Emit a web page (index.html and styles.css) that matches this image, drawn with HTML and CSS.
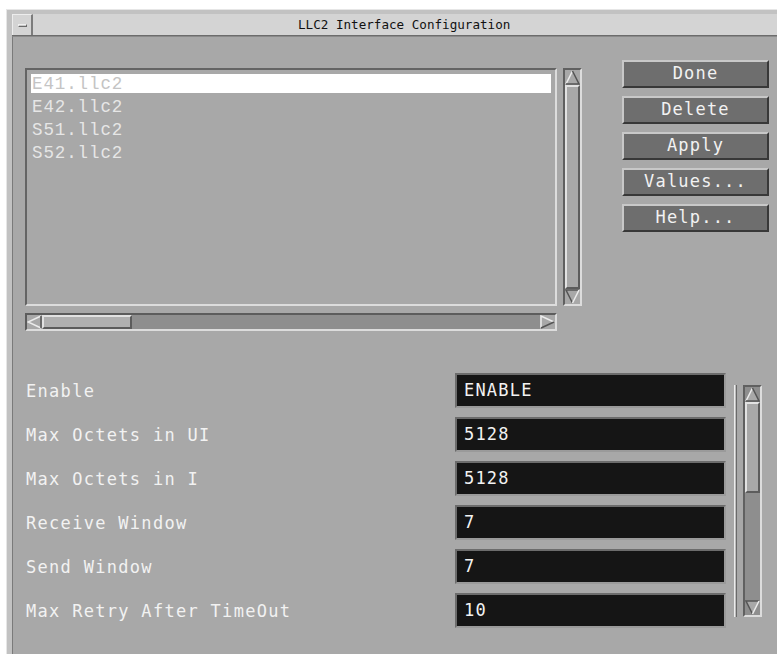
FILE: index.html
```html
<!DOCTYPE html>
<html>
<head>
<meta charset="utf-8">
<title>LLC2 Interface Configuration</title>
<link rel="stylesheet" href="styles.css">
</head>
<body>
<div class="window">
  <div class="titlebar">
    <div class="menu-btn"><span class="menu-bar"></span></div>
    <div class="title">LLC2 Interface Configuration</div>
  </div>
  <div class="client">
    <div class="top">
      <div class="list-col">
        <div class="list-row">
          <div class="listbox">
            <div class="item selected">E41.llc2</div>
            <div class="item">E42.llc2</div>
            <div class="item">S51.llc2</div>
            <div class="item">S52.llc2</div>
          </div>
          <div class="vscroll">
            <div class="arrow">
              <svg width="15" height="15" viewBox="0 0 15 15"><polygon points="7.5,1 1,14 14,14" fill="#a8a8a8"/><polyline points="1,14 7.5,1" stroke="#ececec" stroke-width="1.5" fill="none"/><polyline points="7.5,1 14,14 1,14" stroke="#555" stroke-width="1.5" fill="none"/></svg>
            </div>
            <div class="thumb v-fill"></div>
            <div class="arrow">
              <svg width="15" height="15" viewBox="0 0 15 15"><polygon points="1,1 14,1 7.5,14" fill="#a8a8a8"/><polyline points="14,1 1,1 7.5,14" stroke="#555" stroke-width="1.5" fill="none"/><polyline points="7.5,14 14,1" stroke="#ececec" stroke-width="1.5" fill="none"/></svg>
            </div>
          </div>
        </div>
        <div class="hscroll">
          <div class="harrow">
            <svg width="15" height="14" viewBox="0 0 15 14"><polygon points="1,7 14,1 14,13" fill="#a8a8a8"/><polyline points="14,1 1,7 14,13" stroke="#ececec" stroke-width="1.5" fill="none"/><polyline points="14,1 14,13" stroke="#555" stroke-width="1.5" fill="none"/></svg>
          </div>
          <div class="hthumb"></div>
          <div class="htrough"></div>
          <div class="harrow">
            <svg width="15" height="14" viewBox="0 0 15 14"><polygon points="1,1 14,7 1,13" fill="#a8a8a8"/><polyline points="1,13 1,1 14,7" stroke="#ececec" stroke-width="1.5" fill="none"/><polyline points="14,7 1,13" stroke="#555" stroke-width="1.5" fill="none"/></svg>
          </div>
        </div>
      </div>
      <div class="buttons">
        <div class="btn">Done</div>
        <div class="btn">Delete</div>
        <div class="btn">Apply</div>
        <div class="btn">Values...</div>
        <div class="btn">Help...</div>
      </div>
    </div>
    <div class="form">
      <div class="fields">
        <div class="row"><span class="label">Enable</span><div class="field">ENABLE</div></div>
        <div class="row"><span class="label">Max Octets in UI</span><div class="field">5128</div></div>
        <div class="row"><span class="label">Max Octets in I</span><div class="field">5128</div></div>
        <div class="row"><span class="label">Receive Window</span><div class="field">7</div></div>
        <div class="row"><span class="label">Send Window</span><div class="field">7</div></div>
        <div class="row"><span class="label">Max Retry After TimeOut</span><div class="field">10</div></div>
      </div>
      <div class="form-side">
        <div class="rule"></div>
        <div class="fscroll">
          <div class="arrow">
            <svg width="15" height="15" viewBox="0 0 15 15"><polygon points="7.5,1 1,14 14,14" fill="#a8a8a8"/><polyline points="1,14 7.5,1" stroke="#ececec" stroke-width="1.5" fill="none"/><polyline points="7.5,1 14,14 1,14" stroke="#555" stroke-width="1.5" fill="none"/></svg>
          </div>
          <div class="thumb f-thumb"></div>
          <div class="ftrough"></div>
          <div class="arrow">
            <svg width="15" height="15" viewBox="0 0 15 15"><polygon points="1,1 14,1 7.5,14" fill="#a8a8a8"/><polyline points="14,1 1,1 7.5,14" stroke="#555" stroke-width="1.5" fill="none"/><polyline points="7.5,14 14,1" stroke="#ececec" stroke-width="1.5" fill="none"/></svg>
          </div>
        </div>
      </div>
    </div>
  </div>
</div>
</body>
</html>
```

FILE: styles.css
```css
html, body {
  margin: 0;
  padding: 0;
  background: #ffffff;
  overflow: hidden;
  width: 777px;
  height: 654px;
}

.window {
  margin: 9px 0 0 6px;
  width: 771px;
  height: 645px;
  padding: 4px 0 0 5px;
  background: #c2c2c2;
  border-top: 1px solid #e6e6e6;
  border-left: 1px solid #e6e6e6;
  box-sizing: border-box;
  display: flex;
  flex-direction: column;
}

/* title bar */
.titlebar {
  display: flex;
  height: 22px;
  flex: none;
  background: #d4d4d4;
  border-bottom: 1px solid #6c6c6c;
  box-sizing: border-box;
}

.menu-btn {
  width: 21px;
  height: 21px;
  box-sizing: border-box;
  border-top: 1px solid #ededed;
  border-left: 1px solid #ededed;
  border-right: 2px solid #7c7c7c;
  display: flex;
  align-items: center;
  justify-content: center;
}

.menu-bar {
  width: 9px;
  height: 3px;
  box-sizing: border-box;
  border: 1px solid #6a6a6a;
  border-top-color: #f0f0f0;
  border-left-color: #f0f0f0;
  background: #c8c8c8;
}

.title {
  padding-left: 265px;
  font-family: "DejaVu Sans Mono", monospace;
  font-size: 12.6px;
  line-height: 21px;
  color: #111;
}

/* client area */
.client {
  flex: 1;
  background: #a8a8a8;
  border-left: 1px solid #7a7a7a;
  border-top: 1px solid #8a8a8a;
  overflow: hidden;
}

.top {
  display: flex;
  padding: 23px 0 0 12px;
}

.list-col {
  margin-top: 8px;
}

.list-row {
  display: flex;
  gap: 6px;
}

.listbox {
  width: 532px;
  height: 238px;
  box-sizing: border-box;
  border: 2px solid;
  border-color: #646464 #dcdcdc #dcdcdc #646464;
  padding: 4px;
}

.item {
  height: 19px;
  margin-bottom: 4px;
  padding-left: 1px;
  font-family: "Liberation Mono", "Courier New", monospace;
  font-size: 17.5px;
  letter-spacing: 0.9px;
  line-height: 20px;
  color: #e6e6e6;
}

.item.selected {
  background: #ffffff;
  color: #c4c4c4;
}

/* vertical scrollbars */
.vscroll, .fscroll {
  width: 19px;
  box-sizing: border-box;
  border: 2px solid;
  border-color: #606060 #dcdcdc #dcdcdc #606060;
  display: flex;
  flex-direction: column;
}

.vscroll {
  height: 238px;
}

.arrow {
  height: 15px;
  flex: none;
  display: flex;
}

.thumb {
  box-sizing: border-box;
  border: 2px solid;
  border-color: #e2e2e2 #5c5c5c #5c5c5c #e2e2e2;
  background: #a8a8a8;
}

.v-fill {
  flex: 1;
}

/* horizontal scrollbar */
.hscroll {
  margin-top: 7px;
  width: 532px;
  height: 18px;
  box-sizing: border-box;
  border: 2px solid;
  border-color: #5c5c5c #dcdcdc #dcdcdc #5c5c5c;
  background: #8e8e8e;
  display: flex;
}

.harrow {
  width: 15px;
  flex: none;
  background: #a8a8a8;
  display: flex;
}

.hthumb {
  width: 90px;
  box-sizing: border-box;
  border: 2px solid;
  border-color: #e2e2e2 #5c5c5c #5c5c5c #e2e2e2;
  background: #b0b0b0;
}

.htrough {
  flex: 1;
}

/* action buttons */
.buttons {
  margin-left: 40px;
  display: flex;
  flex-direction: column;
  gap: 8px;
}

.btn {
  width: 147px;
  height: 28px;
  box-sizing: border-box;
  border: 2px solid;
  border-color: #c8c8c8 #383838 #383838 #c8c8c8;
  background: #6e6e6e;
  color: #f2f2f2;
  font-family: "DejaVu Sans Mono", monospace;
  font-size: 17px;
  letter-spacing: 1.2px;
  line-height: 23px;
  text-align: center;
}

/* parameter form */
.form {
  display: flex;
  margin-top: 42px;
  padding-left: 13px;
}

.fields {
  display: flex;
  flex-direction: column;
  gap: 9px;
}

.row {
  display: flex;
  align-items: center;
  height: 35px;
}

.label {
  width: 429px;
  font-family: "DejaVu Sans Mono", monospace;
  font-size: 17px;
  letter-spacing: 1.3px;
  color: #f2f2f2;
}

.field {
  width: 271px;
  height: 35px;
  box-sizing: border-box;
  border: 2px solid;
  border-color: #6c6c6c #9a9a9a #9a9a9a #6c6c6c;
  background: #151515;
  color: #f2f2f2;
  padding-left: 7px;
  font-family: "DejaVu Sans Mono", monospace;
  font-size: 17px;
  letter-spacing: 1.2px;
  line-height: 30px;
}

.form-side {
  display: flex;
  margin-left: 8px;
  padding-top: 12px;
  gap: 6px;
}

.rule {
  width: 3px;
  height: 232px;
  box-sizing: border-box;
  border-left: 1px solid #ececec;
  border-right: 1px solid #6a6a6a;
  background: #bcbcbc;
}

.fscroll {
  height: 232px;
  background: #8e8e8e;
}

.f-thumb {
  height: 91px;
}

.ftrough {
  flex: 1;
}
```
